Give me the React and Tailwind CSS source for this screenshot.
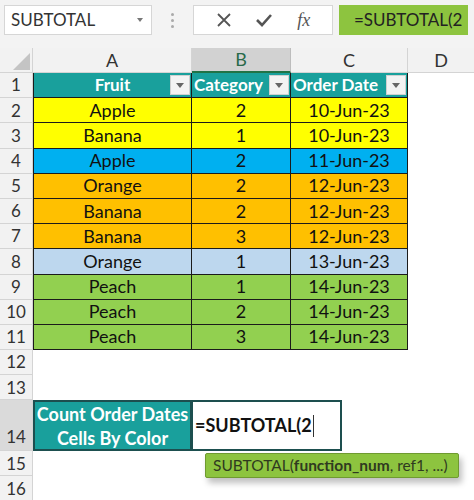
import React from "react";

const font = { fontFamily: "Lato, 'Open Sans', sans-serif" };

const rows = [
  { fruit: "Apple", cat: "2", date: "10-Jun-23", bg: "bg-[#FFFF00]" },
  { fruit: "Banana", cat: "1", date: "10-Jun-23", bg: "bg-[#FFFF00]" },
  { fruit: "Apple", cat: "2", date: "11-Jun-23", bg: "bg-[#00B0F0]" },
  { fruit: "Orange", cat: "2", date: "12-Jun-23", bg: "bg-[#FFC000]" },
  { fruit: "Banana", cat: "2", date: "12-Jun-23", bg: "bg-[#FFC000]" },
  { fruit: "Banana", cat: "3", date: "12-Jun-23", bg: "bg-[#FFC000]" },
  { fruit: "Orange", cat: "1", date: "13-Jun-23", bg: "bg-[#BDD7EE]" },
  { fruit: "Peach", cat: "1", date: "14-Jun-23", bg: "bg-[#92D050]" },
  { fruit: "Peach", cat: "2", date: "14-Jun-23", bg: "bg-[#92D050]" },
  { fruit: "Peach", cat: "3", date: "14-Jun-23", bg: "bg-[#92D050]" },
];

function RowNum({ n, className = "h-[25.2px]", active }) {
  return (
    <div
      className={`w-[33px] shrink-0 flex justify-center border-r border-b border-[#d4d4d4] text-[17px] text-[#333] ${
        active ? "bg-[#dadada] items-end pb-[1px]" : "bg-[#f2f2f2] items-center"
      } ${className}`}
    >
      {n}
    </div>
  );
}

function Dropdown() {
  return (
    <div className="absolute right-[1px] top-[2px] w-[20px] h-[20px] bg-[#f3f3f3] border border-[#d0d0d0] flex items-center justify-center">
      <div className="w-0 h-0 border-l-[4px] border-r-[4px] border-t-[5px] border-l-transparent border-r-transparent border-t-[#666]" />
    </div>
  );
}

export default function App() {
  return (
    <div className="w-[474px] h-[500px] overflow-hidden bg-white relative" style={font}>
      {/* formula bar */}
      <div className="h-[48px] bg-[#f3f3f3] flex items-start pt-[5px] pl-[4px]">
        <div className="w-[148px] h-[30px] bg-white border border-[#d6d6d6] flex items-center justify-between pl-[6px] pr-[8px] text-[17px] text-[#333]">
          <span>SUBTOTAL</span>
          <div className="w-0 h-0 border-l-[3px] border-r-[3px] border-t-[4px] border-l-transparent border-r-transparent border-t-[#777]" />
        </div>
        <div className="w-[41px] h-[30px] flex flex-col items-center justify-center gap-[3px]">
          <div className="w-[3px] h-[3px] rounded-full bg-[#aaa]" />
          <div className="w-[3px] h-[3px] rounded-full bg-[#aaa]" />
          <div className="w-[3px] h-[3px] rounded-full bg-[#aaa]" />
        </div>
        <div className="w-[140px] h-[30px] bg-white border border-[#d6d6d6] flex items-center justify-around px-[10px]">
          <svg width="16" height="16" viewBox="0 0 16 16">
            <path d="M2 2L14 14M14 2L2 14" stroke="#555" strokeWidth="1.8" fill="none" />
          </svg>
          <svg width="18" height="14" viewBox="0 0 18 14">
            <path d="M2 7L7 12L16 2" stroke="#555" strokeWidth="2.6" fill="none" />
          </svg>
          <span className="text-[18px] italic text-[#555]" style={{ fontFamily: "'Liberation Serif', serif" }}>
            fx
          </span>
        </div>
        <div className="ml-[6px] w-[129px] h-[30px] bg-[#8DC43F] flex items-center pl-[15px] text-[17px] text-[#222] whitespace-nowrap overflow-hidden">
          =SUBTOTAL(2
        </div>
      </div>

      {/* column headers */}
      <div className="flex h-[25px] bg-[#f2f2f2] text-[18px] text-[#333]">
        <div className="w-[33px] border-r border-b border-[#d4d4d4] flex items-end justify-end p-[2px]">
          <div className="w-0 h-0 border-b-[17px] border-l-[17px] border-b-[#c4c4c4] border-l-transparent" />
        </div>
        <div className="w-[159px] border-r border-b border-[#d4d4d4] flex items-center justify-center">A</div>
        <div className="w-[99px] bg-[#d2d2d2] border-r border-[#bdbdbd] border-b-2 border-b-[#217346] flex items-center justify-center text-[#2a6a4a]">
          B
        </div>
        <div className="w-[117px] border-r border-b border-[#d4d4d4] flex items-center justify-center">C</div>
        <div className="w-[66px] border-b border-[#d4d4d4] flex items-center justify-center">D</div>
      </div>

      {/* header row 1 */}
      <div className="flex h-[25.2px] text-[17px]">
        <RowNum n="1" />
        <div className="w-[159px] relative bg-[#19A09C] border-l border-b border-r border-[#1b1b1b] flex items-center justify-center font-bold text-white">
          Fruit
          <Dropdown />
        </div>
        <div className="w-[99px] relative bg-[#19A09C] border-b border-r border-[#1b1b1b] flex items-center pl-[2px] font-bold text-white">
          Category
          <Dropdown />
        </div>
        <div className="w-[117px] relative bg-[#19A09C] border-b border-r border-[#1b1b1b] flex items-center pl-[2px] font-bold text-white">
          Order Date
          <Dropdown />
        </div>
        <div className="w-[66px]" />
      </div>

      {rows.map((r, i) => (
        <div key={i} className="flex h-[25.2px] text-[18px] text-[#111]">
          <RowNum n={i + 2} />
          <div className={`w-[159px] ${r.bg} border-l border-b border-r border-[#1b1b1b] flex items-center justify-center`}>
            {r.fruit}
          </div>
          <div className={`w-[99px] ${r.bg} border-b border-r border-[#1b1b1b] flex items-center justify-center`}>
            {r.cat}
          </div>
          <div className={`w-[117px] ${r.bg} border-b border-r border-[#1b1b1b] flex items-center justify-center`}>
            {r.date}
          </div>
          <div className="w-[66px]" />
        </div>
      ))}

      <div className="flex h-[25.2px]">
        <RowNum n="12" />
      </div>
      <div className="flex h-[25.2px]">
        <RowNum n="13" />
      </div>

      {/* row 14 */}
      <div className="flex h-[51px] relative">
        <RowNum n="14" className="h-[51px]" active />
        <div className="w-[159px] bg-[#19A09C] border-2 border-[#1d4f4f] flex flex-col items-center justify-center font-bold text-white text-[18px] leading-[24px]">
          <span>Count Order Dates</span>
          <span>Cells By Color</span>
        </div>
        <div className="w-[151px] -ml-[1px] bg-white border-2 border-[#1d4f4f] flex items-center pl-[2px] font-bold text-[18px] text-[#111]">
          =SUBTOTAL(2
          <span className="w-[1px] h-[22px] bg-[#333] ml-[1px]" />
        </div>
      </div>
      <div className="flex h-[25px] relative">
        <RowNum n="15" className="h-[25px]" />
        <div className="absolute left-[205px] top-[2px] h-[25px] w-[254px] bg-[#8DC43F] border border-[#6f9a30] rounded-[2px] shadow-[3px_5px_6px_rgba(0,0,0,0.25)] flex items-center pl-[7px] text-[15.5px] text-[#2f3a1f] whitespace-nowrap z-10">
          SUBTOTAL(<span className="font-bold">function_num</span>, ref1, ...)
        </div>
      </div>
      <div className="flex h-[25px]">
        <RowNum n="16" className="h-[25px]" />
      </div>
    </div>
  );
}
